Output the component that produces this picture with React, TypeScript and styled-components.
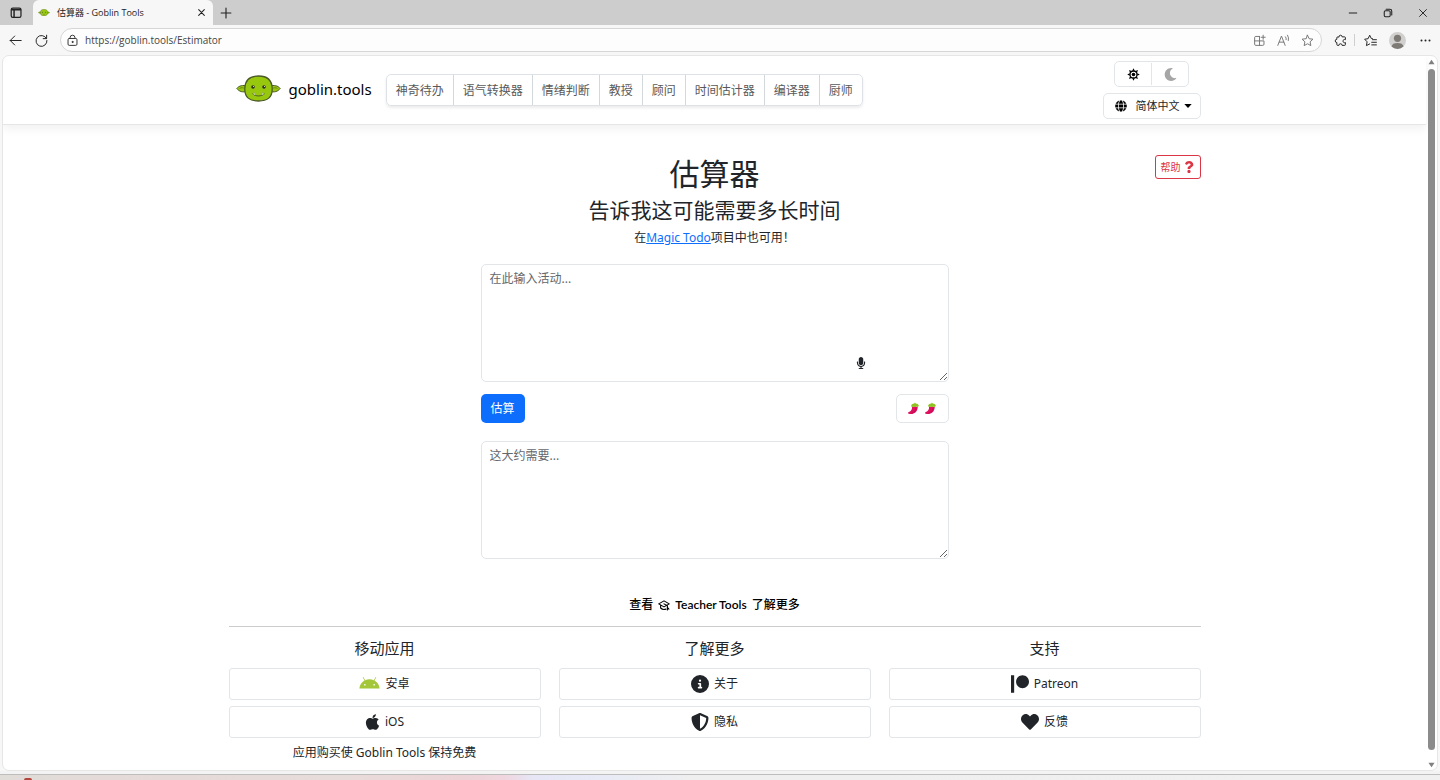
import React from 'react';
import styled, { createGlobalStyle, css } from 'styled-components';
import { FaAndroid, FaApple, FaCircleInfo, FaShieldHalved } from 'react-icons/fa6';
import { FaGlobe, FaHeart, FaMicrophone, FaMoon, FaQuestion } from 'react-icons/fa';

const GlobalStyle = createGlobalStyle`
  *, *::before, *::after { box-sizing: border-box; }
  body {
    margin: 0;
    background: #f7f7f7;
    color: #212529;
    font-family: "Noto Sans", "Noto Sans CJK SC", sans-serif;
    font-size: 12px;
    line-height: 18px;
  }
  button, input, textarea, select { font: inherit; color: inherit; margin: 0; }
  h1, h2, h3, p { margin: 0; font-weight: 400; }
  svg { display: block; flex: none; }
`;

/* ---------- browser frame ---------- */

const Window = styled.div`
  min-height: 100vh;
  display: flex;
  flex-direction: column;
`;

const TabStrip = styled.div`
  height: 25px;
  display: flex;
  align-items: center;
  background: #cdcdcd;
  font-family: "Open Sans", "Noto Sans CJK SC", sans-serif;
`;

const FrameButton = styled.button<{ $w: number; $muted?: boolean }>`
  width: ${(p) => p.$w}px;
  height: 24px;
  padding: 0;
  border: 0;
  background: none;
  display: flex;
  align-items: center;
  justify-content: center;
  color: ${(p) => (p.$muted ? '#777' : '#222')};
`;

const Tab = styled.div`
  width: 180px;
  height: 25px;
  padding: 0 2px 0 5px;
  display: flex;
  align-items: center;
  gap: 7px;
  border-radius: 6px 6px 0 0;
  background: #f7f7f7;
  color: #222;
  font-size: 9px;
`;

const TabTitle = styled.span`
  flex: 1;
  white-space: nowrap;
`;

const Spacer = styled.div`
  flex: 1;
`;

const Toolbar = styled.div`
  height: 30px;
  padding-left: 2px;
  display: flex;
  align-items: center;
  background: #f7f7f7;
  font-family: "Open Sans", "Noto Sans CJK SC", sans-serif;
`;

const AddressBar = styled.label`
  flex: 1;
  height: 24px;
  margin: 0 5px;
  padding: 0 2px 0 5px;
  display: flex;
  align-items: center;
  gap: 6px;
  border: 1px solid #d6d6d6;
  border-radius: 12px;
  background: #fdfdfd;
  color: #333;
`;

const AddressInput = styled.input`
  flex: 1;
  min-width: 0;
  padding: 0;
  border: 0;
  outline: 0;
  background: none;
  font-size: 10px;
  color: #444;
`;

const ToolDivider = styled.span`
  width: 1px;
  height: 12px;
  background: #cfcfcf;
`;

const Viewport = styled.div`
  flex: 1;
  margin: 0 2px;
  display: flex;
  border: 1px solid #e6e6e6;
  border-radius: 7px;
  background: #fff;
  overflow: hidden;
`;

const Page = styled.div`
  flex: 1;
  min-width: 0;
`;

const ScrollTrack = styled.div`
  width: 11px;
  padding: 3px 2px 2px;
  display: flex;
  flex-direction: column;
  align-items: center;
  gap: 4px;
`;

const ScrollThumb = styled.div`
  flex: 1;
  width: 7px;
  margin-bottom: 8px;
  border-radius: 4px;
  background: #8b8b8b;
`;

const Desktop = styled.div`
  height: 9px;
  border-top: 3px solid #f3f3f3;
`;

const TaskBar = styled.div`
  height: 6px;
  padding: 0 24px;
  border-top: 1px solid #bdbdbd;
  display: flex;
  align-items: flex-end;
  background: linear-gradient(90deg, #e0dcd8 0%, #e6dad8 12%, #e8dcda 24%, #ecd3d6 32%, #f0d5de 35%, #e6e6f6 37%, #e8ebf6 42%, #efefef 48%, #f0f0f0 100%);
`;

const TaskIcon = styled.span`
  width: 8px;
  height: 2px;
  border-radius: 4px 4px 0 0;
  background: #b5443c;
`;

/* ---------- site header ---------- */

const Container = styled.div`
  max-width: 990px;
  margin: 0 auto;
  padding: 0 9px;
`;

const SiteHeader = styled.header`
  border-bottom: 1px solid #e6e6e6;
  box-shadow: 0 4px 9px rgba(0, 0, 0, 0.06);
`;

const HeaderRow = styled(Container)`
  height: 68px;
  display: flex;
  align-items: center;
`;

const Brand = styled.a`
  margin-left: 7px;
  padding-bottom: 3px;
  display: flex;
  align-items: center;
  gap: 8px;
  color: #000;
  font-size: 15px;
  text-decoration: none;
`;

const NavGroup = styled.nav`
  margin-left: 14px;
  display: flex;
  border: 1px solid #dee2e6;
  border-radius: 5px;
  box-shadow: 0 2px 3px rgba(0, 0, 0, 0.08);
  overflow: hidden;
`;

const NavItem = styled.a`
  padding: 7px 9px 5px;
  color: #595959;
  text-decoration: none;
  white-space: nowrap;
  & + & { border-left: 1px solid #d3d8dd; }
`;

const Settings = styled.div`
  margin-left: auto;
  display: flex;
  flex-direction: column;
  align-items: center;
  gap: 6px;
`;

const outlined = css`
  border: 1px solid #e3e6e9;
  border-radius: 5px;
  background: #fff;
`;

const ThemeSwitch = styled.div`
  ${outlined}
  width: 75px;
  height: 26px;
  padding: 1px 0;
  display: flex;
`;

const ThemeButton = styled.button<{ $off?: boolean }>`
  flex: 1;
  padding: 0;
  border: 0;
  background: none;
  display: flex;
  align-items: center;
  justify-content: center;
  font-size: 12px;
  color: ${(p) => (p.$off ? '#a6a6a6' : '#000')};
  & + & { border-left: 1px solid #e3e6e9; }
`;

const LanguageBox = styled.label`
  ${outlined}
  width: 98px;
  height: 26px;
  padding: 0 8px 0 11px;
  display: flex;
  align-items: center;
  gap: 4px;
  color: #000;
`;

const LanguageSelect = styled.select`
  width: 44px;
  margin-left: 5px;
  padding: 0;
  border: 0;
  outline: 0;
  appearance: none;
  background: none;
  font-size: 11px;
  color: #212529;
`;

/* ---------- main ---------- */

const Intro = styled.div`
  padding-top: 30px;
  display: grid;
  grid-template-columns: 1fr auto 1fr;
  align-items: start;
  text-align: center;
`;

const IntroText = styled.div`
  grid-column: 2;
`;

const Title = styled.h1`
  font-size: 30px;
  line-height: 38px;
`;

const Subtitle = styled.h2`
  font-size: 21px;
  line-height: 35px;
`;

const Note = styled.p`
  line-height: 20px;
`;

const TextLink = styled.a`
  color: #0d6efd;
`;

const HelpButton = styled.button`
  grid-column: 3;
  justify-self: end;
  height: 24px;
  padding: 0 5px;
  display: flex;
  align-items: center;
  gap: 2px;
  border: 1px solid #dc3545;
  border-radius: 3px;
  background: #fff;
  color: #dc3545;
  font-size: 10px;
`;

const Form = styled.form`
  width: 468px;
  max-width: 100%;
  margin: 16px auto 0;
`;

const FieldWrap = styled.div`
  position: relative;
`;

const Field = styled.textarea`
  ${outlined}
  display: block;
  width: 100%;
  height: 118px;
  padding: 5px 8px;
  resize: vertical;
  outline: 0;
  &::placeholder { color: #63686d; opacity: 1; }
`;

const MicButton = styled.button`
  position: absolute;
  right: 80px;
  bottom: 12px;
  padding: 0;
  width: 16px;
  height: 14px;
  border: 0;
  background: none;
  display: flex;
  align-items: center;
  justify-content: center;
`;

const Actions = styled.div`
  margin: 12px 0 18px;
  display: flex;
  justify-content: space-between;
`;

const SubmitButton = styled.button`
  height: 29px;
  padding: 0 10px;
  border: 0;
  border-radius: 5px;
  background: #0d6efd;
  color: #fff;
`;

const SpiceButton = styled.button`
  ${outlined}
  width: 53px;
  height: 29px;
  padding: 0;
  display: flex;
  align-items: center;
  justify-content: center;
  gap: 4px;
`;

/* ---------- footer ---------- */

const Teacher = styled.a`
  margin-top: 37px;
  display: flex;
  align-items: center;
  justify-content: center;
  gap: 5px;
  color: #000;
  font-weight: 500;
  text-decoration: none;
`;

const TeacherName = styled.span`
  font-family: Lato, sans-serif;
  font-size: 12px;
  font-weight: 600;
`;

const Rule = styled.hr`
  margin: 12px 0 11px;
  border: 0;
  border-top: 1px solid #cbcccd;
`;

const Columns = styled.div`
  display: grid;
  grid-template-columns: repeat(3, 1fr);
  gap: 18px;
  text-align: center;
`;

const Column = styled.section`
  display: flex;
  flex-direction: column;
  gap: 6px;
`;

const ColumnTitle = styled.h3`
  margin-bottom: 4px;
  font-size: 15px;
  line-height: 20px;
`;

const FooterLink = styled.a<{ $tint?: string; $iconWidth?: number }>`
  ${outlined}
  height: 32px;
  display: flex;
  align-items: center;
  justify-content: center;
  gap: 5px;
  border-radius: 3px;
  color: #212529;
  text-decoration: none;
  svg {
    width: ${(p) => p.$iconWidth ?? 18}px;
    height: 18px;
    color: ${(p) => p.$tint ?? '#212529'};
  }
`;

/* ---------- drawings ---------- */

const Goblin = ({ width }: { width: number }) => (
  <svg width={width} viewBox="0 0 45 27" aria-hidden="true">
    <g fill="#98c80e" stroke="#4c5a2a" strokeWidth="1">
      <path d="M11 11.2C7 9.6 3 10.8.8 13.4 3 16.6 6.8 17.6 11 16.4z" />
      <path d="M34 11.2c4-1.6 8-.4 10.200 2.200-2.200 3.200-6 4.200-10.200 3z" />
      <path d="M22.500 1C13 1 9 5.500 8.800 13.500 8.600 22.500 13.500 26 22.500 26S36.400 22.500 36.200 13.500C36 5.500 32 1 22.500 1z" strokeWidth="1.300" />
    </g>
    <path d="M3.500 13.500c2-1.200 4-1 5.500.4M41.500 13.500c-2-1.200-4-1-5.500.4" fill="none" stroke="#5c7a10" strokeWidth=".8" />
    <circle cx="17" cy="12" r="1.800" fill="#303426" />
    <circle cx="28" cy="12" r="1.800" fill="#303426" />
    <circle cx="17.500" cy="11.500" r=".5" fill="#fff" />
    <circle cx="28.500" cy="11.500" r=".5" fill="#fff" />
    <path d="M16.500 18.700c3 3 9 3 12 0" fill="none" stroke="#4c5a2a" strokeWidth="1" />
    <path d="M17.200 19.300l1-2 1.100 3zM25.700 20.300l1.100-3 1 2z" fill="#f3f3e4" stroke="#6b7a4a" strokeWidth=".3" />
  </svg>
);

const Pepper = () => (
  <svg width="13" height="13" viewBox="0 0 13 13" aria-hidden="true">
    <path d="M5 4.500c.4 2.400-.4 4.500-3.600 5.700-.5.300-.4 1.200.3 1.500 4.600 1.100 8.800-1.200 9.100-7z" fill="#e0105f" />
    <path d="M9 5.600c0 2.600-1.400 4.600-4.200 5.600" fill="none" stroke="#b20d55" strokeWidth=".8" />
    <path d="M7.400 1.100c.5-.6 1.200-.3 1.300.4 1.800.2 3.200 1.200 3.200 2.600-.9 1.100-2 .9-2.600.3-.9.800-2 .7-2.600.1-.9.700-1.900.5-2.600-.3.100-1.500 1.300-2.500 3.300-2.600z" fill="#8fc31f" />
  </svg>
);

const Line = ({ size = 13, children }: { size?: number; children: React.ReactNode }) => (
  <svg
    width={size}
    height={size}
    viewBox="0 0 16 16"
    fill="none"
    stroke="currentColor"
    strokeWidth="1.200"
    strokeLinecap="round"
    strokeLinejoin="round"
    aria-hidden="true"
  >
    {children}
  </svg>
);

const RAYS = [0, 45, 90, 135, 180, 225, 270, 315];

const Sun = () => (
  <svg width="13" height="13" viewBox="0 0 26 26" fill="currentColor" aria-hidden="true">
    <circle cx="13" cy="13" r="7" fill="none" stroke="currentColor" strokeWidth="2.600" />
    <circle cx="13" cy="13" r="3.600" />
    {RAYS.map((angle) => (
      <path key={angle} d="M10.500 5.500L13 .5l2.500 5z" transform={`rotate(${angle} 13 13)`} />
    ))}
  </svg>
);

const Patreon = () => (
  <svg viewBox="0 0 512 512" fill="currentColor" aria-hidden="true">
    <path d="M512 194.800c0 101.300-82.400 183.800-183.800 183.800-101.700 0-184.400-82.400-184.400-183.800 0-101.600 82.700-184.300 184.400-184.300C429.600 10.500 512 93.200 512 194.800zM0 501.500h90v-491H0v491z" />
  </svg>
);

const Arrow = ({ down }: { down?: boolean }) => (
  <svg width="7" height="6" viewBox="0 0 8 6" fill="#808080" aria-hidden="true">
    <path d={down ? 'M.5.500h7L4 5.500z' : 'M.5 5.500h7L4 .5z'} />
  </svg>
);

const Caret = () => (
  <svg width="8" height="4" viewBox="0 0 8 4" fill="currentColor" aria-hidden="true">
    <path d="M.3 0h7.400L4 3.900z" />
  </svg>
);

const STAR = 'M8 1.500l2 4.300 4.700.6-3.500 3.200.9 4.700L8 12l-4.100 2.300.9-4.700L1.300 6.400 6 5.800z';

const navItems = ['神奇待办', '语气转换器', '情绪判断', '教授', '顾问', '时间估计器', '编译器', '厨师'];

export default function App() {
  return (
    <Window>
      <GlobalStyle />
      <TabStrip>
        <FrameButton $w={33} aria-label="标签页操作">
          <Line>
            <rect x="1.500" y="2.500" width="12" height="11.500" rx="2" strokeWidth="1.500" />
            <path d="M2 4.500h11M5 5v8.500" strokeWidth="1.800" />
          </Line>
        </FrameButton>
        <Tab>
          <Goblin width={12} />
          <TabTitle>估算器 - Goblin Tools</TabTitle>
          <FrameButton $w={20} aria-label="关闭标签页">
            <Line size={9}><path d="M3 3l10 10M13 3L3 13" strokeWidth="1.900" /></Line>
          </FrameButton>
        </Tab>
        <FrameButton $w={26} aria-label="新建标签页">
          <Line size={12}><path d="M8 1.500v13M1.500 8h13" strokeWidth="1.500" /></Line>
        </FrameButton>
        <Spacer />
        <FrameButton $w={34} aria-label="最小化">
          <Line size={10}><path d="M2 8h12" strokeWidth="1.600" /></Line>
        </FrameButton>
        <FrameButton $w={35} aria-label="还原">
          <Line size={10}>
            <rect x="2" y="4.500" width="9.500" height="9.500" rx="2" strokeWidth="1.700" />
            <path d="M5 2h6a3 3 0 0 1 3 3v6" strokeWidth="1.700" />
          </Line>
        </FrameButton>
        <FrameButton $w={35} aria-label="关闭">
          <Line size={10}><path d="M2.500 2.500l11 11M13.500 2.500l-11 11" strokeWidth="1.500" /></Line>
        </FrameButton>
      </TabStrip>

      <Toolbar>
        <FrameButton $w={26} aria-label="后退">
          <Line><path d="M15 8H1.500M7 2.500L1.500 8 7 13.500" /></Line>
        </FrameButton>
        <FrameButton $w={27} aria-label="刷新">
          <Line><path d="M14 5.500A6.700 6.700 0 1 0 14.700 8M14.300 1.500v4.200h-4.200" /></Line>
        </FrameButton>
        <AddressBar>
          <Line>
            <rect x="2.500" y="5.500" width="11" height="8.500" rx="1.500" />
            <path d="M5 5.500V4.500a3 3 0 0 1 6 0v1" />
            <circle cx="8" cy="9.800" r=".7" fill="currentColor" />
          </Line>
          <AddressInput aria-label="地址" defaultValue="https://goblin.tools/Estimator" />
          <FrameButton type="button" $w={24} $muted aria-label="安装应用">
            <Line><path d="M8 3H3.500A1.500 1.500 0 0 0 2 4.500v8A1.500 1.500 0 0 0 3.500 14h8.500a1.500 1.500 0 0 0 1.500-1.500V8.500H2M8 3v11M12.500 1.500v5M10 4h5" /></Line>
          </FrameButton>
          <FrameButton type="button" $w={12} $muted aria-label="朗读此页">
            <Line><path d="M1 14L5.500 2.500 10 14M2.800 10h5.600M10.500 3.500a4 4 0 0 1 .8 3.500M13 1.500a8 8 0 0 1 1 6.500" /></Line>
          </FrameButton>
          <FrameButton type="button" $w={24} $muted aria-label="收藏">
            <Line><path d={STAR} /></Line>
          </FrameButton>
        </AddressBar>
        <FrameButton $w={27} aria-label="扩展">
          <Line><path d="M6 3.500a2 2 0 0 1 4 0h3a1 1 0 0 1 1 1V7a2 2 0 1 0 0 3.500V13a1 1 0 0 1-1 1h-3a2 2 0 0 0-4 0H4.500a1 1 0 0 1-1-1v-2.500a2 2 0 0 1 0-4v-2a1 1 0 0 1 1-1z" /></Line>
        </FrameButton>
        <ToolDivider />
        <FrameButton $w={30} aria-label="收藏夹">
          <Line><path d="M10.500 5.800L9 5.600 7 1.500 5 5.800l-4.200.6 3 3.200-.8 4.700L7 12.200M10.500 7h4.800M9.500 10.200h5.800M9.500 13.400h5.800" /></Line>
        </FrameButton>
        <FrameButton $w={25} aria-label="个人资料">
          <svg width="17" height="17" viewBox="0 0 17 17" aria-hidden="true">
            <circle cx="8.500" cy="8.500" r="8.500" fill="#d2d0ce" />
            <circle cx="8.500" cy="6.300" r="3.600" fill="#7d7975" />
            <path d="M2.500 14.500c.5-2.500 2.500-3.500 6-3.500s5.500 1 6 3.500a8.500 8.500 0 0 1-12 0z" fill="#7d7975" />
          </svg>
        </FrameButton>
        <FrameButton $w={30} aria-label="更多">
          <svg width="11" height="3" viewBox="0 0 11 3" fill="currentColor" aria-hidden="true">
            <circle cx="1.500" cy="1.500" r="1" />
            <circle cx="5.500" cy="1.500" r="1" />
            <circle cx="9.500" cy="1.500" r="1" />
          </svg>
        </FrameButton>
      </Toolbar>

      <Viewport>
        <Page>
          <SiteHeader>
            <HeaderRow>
              <Brand href="#">
                <Goblin width={45} />
                goblin.tools
              </Brand>
              <NavGroup>
                {navItems.map((label) => (
                  <NavItem key={label} href="#">{label}</NavItem>
                ))}
              </NavGroup>
              <Settings>
                <ThemeSwitch>
                  <ThemeButton aria-label="浅色"><Sun /></ThemeButton>
                  <ThemeButton $off aria-label="深色"><FaMoon size={13} /></ThemeButton>
                </ThemeSwitch>
                <LanguageBox>
                  <FaGlobe />
                  <LanguageSelect aria-label="语言">
                    <option>简体中文</option>
                  </LanguageSelect>
                  <Caret />
                </LanguageBox>
              </Settings>
            </HeaderRow>
          </SiteHeader>

          <Container as="main">
            <Intro>
              <IntroText>
                <Title>估算器</Title>
                <Subtitle>告诉我这可能需要多长时间</Subtitle>
                <Note>在<TextLink href="#">Magic Todo</TextLink>项目中也可用！</Note>
              </IntroText>
              <HelpButton>帮助<FaQuestion size={12} /></HelpButton>
            </Intro>
            <Form onSubmit={(e) => e.preventDefault()}>
              <FieldWrap>
                <Field aria-label="活动" placeholder="在此输入活动..." />
                <MicButton type="button" aria-label="语音输入"><FaMicrophone size={12} /></MicButton>
              </FieldWrap>
              <Actions>
                <SubmitButton>估算</SubmitButton>
                <SpiceButton type="button" aria-label="辣度"><Pepper /><Pepper /></SpiceButton>
              </Actions>
              <Field aria-label="结果" placeholder="这大约需要..." />
            </Form>
          </Container>

          <Container as="footer">
            <Teacher href="#">
              查看
              <Line size={12}>
                <path d="M1 6.500L8 2.500l7 4-7 4zM3.500 8.500v3.500c2 2 5 2.300 7 1.500M8 6.500l4.500 2.500v5.500M12.500 11l2 2.500" strokeWidth="1.500" />
              </Line>
              <TeacherName>Teacher Tools</TeacherName>
              了解更多
            </Teacher>
            <Rule />
            <Columns>
              <Column>
                <ColumnTitle>移动应用</ColumnTitle>
                <FooterLink href="#" $tint="#a4c639" $iconWidth={21}><FaAndroid />安卓</FooterLink>
                <FooterLink href="#" $iconWidth={15}><FaApple />iOS</FooterLink>
                <p>应用购买使 Goblin Tools 保持免费</p>
              </Column>
              <Column>
                <ColumnTitle>了解更多</ColumnTitle>
                <FooterLink href="#"><FaCircleInfo />关于</FooterLink>
                <FooterLink href="#"><FaShieldHalved />隐私</FooterLink>
              </Column>
              <Column>
                <ColumnTitle>支持</ColumnTitle>
                <FooterLink href="#"><Patreon />Patreon</FooterLink>
                <FooterLink href="#"><FaHeart />反馈</FooterLink>
              </Column>
            </Columns>
          </Container>
        </Page>
        <ScrollTrack>
          <Arrow />
          <ScrollThumb />
          <Arrow down />
        </ScrollTrack>
      </Viewport>
      <Desktop>
        <TaskBar><TaskIcon /></TaskBar>
      </Desktop>
    </Window>
  );
}
